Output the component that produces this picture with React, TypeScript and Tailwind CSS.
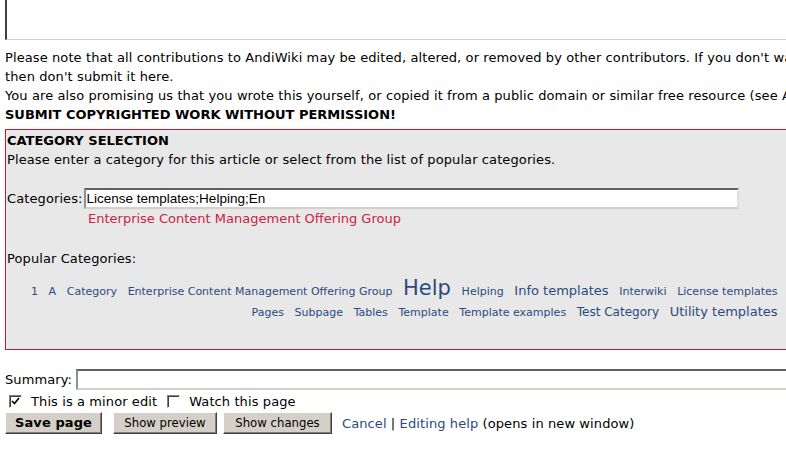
import React from "react";

const line1: [string, string][] = [
  ["1", "text-[11px]"],
  ["A", "text-[11px]"],
  ["Category", "text-[11px]"],
  ["Enterprise Content Management Offering Group", "text-[11px]"],
  ["Help", "text-[21px]"],
  ["Helping", "text-[11px]"],
  ["Info templates", "text-[13px]"],
  ["Interwiki", "text-[11px]"],
  ["License templates", "text-[11px]"],
];
const line2: [string, string][] = [
  ["Pages", "text-[11px]"],
  ["Subpage", "text-[11px]"],
  ["Tables", "text-[11px]"],
  ["Template", "text-[11px]"],
  ["Template examples", "text-[11px]"],
  ["Test Category", "text-[12px]"],
  ["Utility templates", "text-[13px]"],
];

function Tags({ items }: { items: [string, string][] }) {
  return (
    <div className="text-right whitespace-nowrap">
      {items.map(([t, c]) => (
        <React.Fragment key={t}>
          <span className={c + " ml-[3px] mr-[3.5px]"}>{t}</span>{" "}
        </React.Fragment>
      ))}
    </div>
  );
}

function Btn({ children, bold, w }: { children: React.ReactNode; bold?: boolean; w: string }) {
  return (
    <button
      className={
        w +
        " h-[22px] px-0 shrink-0 bg-[#d4d0c8] border border-t-white border-l-white border-r-[#404040] border-b-[#404040] shadow-[inset_-1px_-1px_0_#808080] text-[13px] leading-[18px] text-black text-center " +
        (bold ? "font-bold font-['DejaVu_Sans'] tracking-[0.1px]" : "tracking-normal font-['DejaVu_Sans_Condensed','Liberation_Sans',sans-serif]")
      }
    >
      {children}
    </button>
  );
}

export default function App() {
  return (
    <div className="w-[786px] h-[453px] overflow-hidden bg-white text-black font-['DejaVu_Sans','Verdana',sans-serif] text-[13px] tracking-[0.1px] leading-[19px]">
      <div className="w-[830px] pl-[5px] whitespace-nowrap">
        <div className="h-[40px] border-l-2 border-l-[#404040] border-b border-b-[#d4d0c8]" />
        <div className="mt-[8px]">
          <div>
            Please note that all contributions to AndiWiki may be edited, altered, or removed by other contributors. If you don't want your writing to be edited mercilessly,
          </div>
          <div>then don't submit it here.</div>
          <div>
            You are also promising us that you wrote this yourself, or copied it from a public domain or similar free resource (see AndiWiki:Copyrights for details).
          </div>
          <div className="font-bold tracking-normal">SUBMIT COPYRIGHTED WORK WITHOUT PERMISSION!</div>
        </div>
        <div className="mt-[5px] h-[221px] border border-[#c8163c] bg-[#e8e8e8] pl-[1px] pt-[1px]">
          <div className="font-bold tracking-normal">CATEGORY SELECTION</div>
          <div>Please enter a category for this article or select from the list of popular categories.</div>
          <div className="h-[19px]" />
          <div className="flex items-center h-[21px]">
            <span>Categories:</span>
            <div className="ml-[1px] w-[655px] h-[21px] bg-white border-2 border-t-[#606060] border-l-[#909090] border-r-[#e4e0d8] border-b-[#d4d0c8] flex items-center pl-[1px] text-[13.5px] tracking-normal font-['Liberation_Sans',sans-serif]">
              License templates;Helping;En
            </div>
          </div>
          <div className="pl-[81px] text-[#cc2244] tracking-normal">Enterprise Content Management Offering Group</div>
          <div className="h-[21px]" />
          <div>Popular Categories:</div>
          <div className="mt-[10px] pr-[48px] text-[#2a4b7f] leading-[20px] tracking-normal">
            <Tags items={line1} />
            <Tags items={line2} />
          </div>
        </div>
        <div className="mt-[19px] flex items-center h-[21px]">
          <span>Summary:</span>
          <div className="ml-[4px] flex-1 h-[21px] bg-white border-2 border-t-[#606060] border-l-[#909090] border-r-[#e4e0d8] border-b-[#d4d0c8]" />
        </div>
        <div className="flex items-center h-[22px]">
          <span className="ml-[4px] w-[13px] h-[13px] border border-t-[#808080] border-l-[#808080] border-r-white border-b-white bg-white flex items-center justify-center shadow-[inset_1px_1px_0_#404040]">
            <svg width="9" height="9" viewBox="0 0 9 9">
              <path d="M1 4 L3.5 6.5 L8 1" stroke="black" strokeWidth="1.6" fill="none" />
            </svg>
          </span>
          <span className="ml-[9px]">This is a minor edit</span>
          <span className="ml-[10px] w-[13px] h-[13px] border border-t-[#808080] border-l-[#808080] border-r-white border-b-white bg-white shadow-[inset_1px_1px_0_#404040]" />
          <span className="ml-[9px]">Watch this page</span>
        </div>
        <div className="flex items-center">
          <Btn bold w="w-[97px]">Save page</Btn>
          <span className="w-[11px] shrink-0" />
          <Btn w="w-[104px]">Show preview</Btn>
          <span className="w-[6px] shrink-0" />
          <Btn w="w-[109px]">Show changes</Btn>
          <span className="ml-[10px]">
            <span className="text-[#2a4b7f]">Cancel</span> | <span className="text-[#2a4b7f]">Editing help</span> (opens in new window)
          </span>
        </div>
      </div>
    </div>
  );
}
